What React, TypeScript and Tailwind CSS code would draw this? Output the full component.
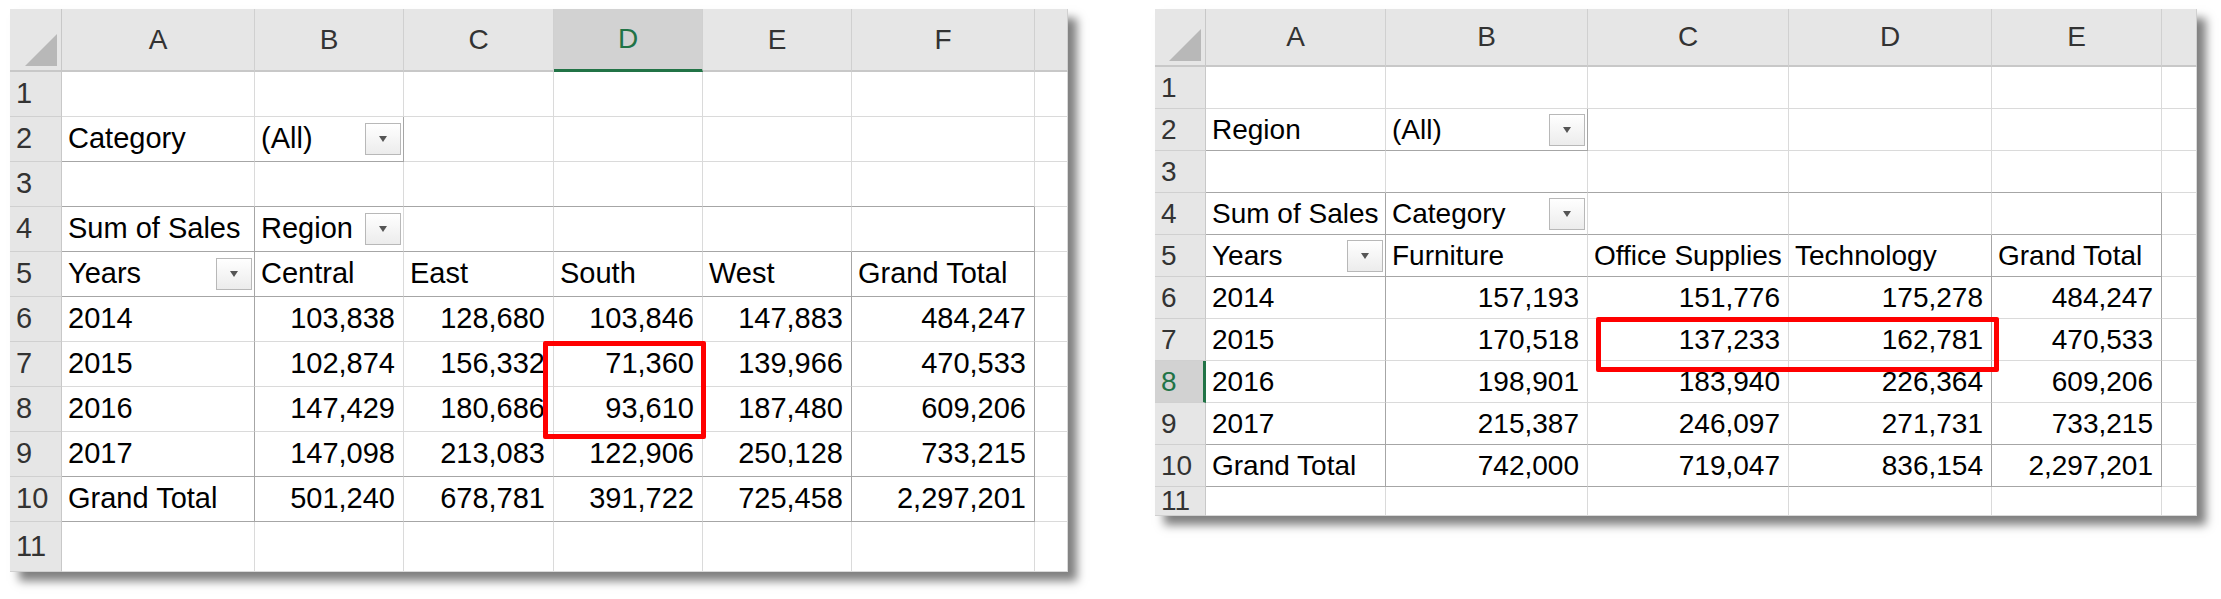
import React from "react";

type Cell = { t?: string; r?: boolean; dd?: boolean; cls?: string };

const Tri = () => (
  <svg width="14" height="10" viewBox="0 0 14 10"><path d="M3 2h8l-4 6z" fill="#555" /></svg>
);

const DD = () => (
  <div className="absolute right-[2px] top-1/2 -translate-y-1/2 w-[36px] h-[32px] border border-[#b8b8b8] bg-gradient-to-b from-white to-[#ececec] flex items-center justify-center">
    <Tri />
  </div>
);

function Sheet(props: {
  cols: string;
  letters: string[];
  headH: string;
  rowH: string;
  rows: Cell[][];
  hiCol?: number;
  hiRow?: number;
  fs: string;
  red: string;
  lastRowCls: string;
}) {
  const { letters, rows } = props;
  return (
    <div className="relative bg-white shadow-[9px_9px_9px_rgba(0,0,0,0.5)] overflow-hidden" style={{ fontFamily: "'Liberation Sans', Arial, sans-serif" }}>
      <div className={`grid ${props.cols}`}>
        <div className={`${props.headH} bg-[#e6e6e6] border-r border-b-2 border-[#c8c8c8] relative`}>
          <svg className="absolute right-[4px] bottom-[4px]" width="32" height="32" viewBox="0 0 32 32"><path d="M32 0V32H0z" fill="#b8b8b8" /></svg>
        </div>
        {letters.map((l, i) => (
          <div
            key={i}
            className={`${props.headH} flex items-center justify-center text-[28px] text-[#333] border-r border-[#d0d0d0] ${
              props.hiCol === i ? "bg-[#d2d2d2] border-b-[3px] border-b-[#217346] text-[#217346]" : "bg-[#e6e6e6] border-b-2 border-b-[#c8c8c8]"
            }`}
          >
            {l}
          </div>
        ))}
        {rows.map((row, ri) => (
          <React.Fragment key={ri}>
            <div
              className={`${ri === rows.length - 1 ? props.lastRowCls : props.rowH} flex items-center pl-[6px] ${props.fs} text-[#333] border-b border-[#d0d0d0] ${
                props.hiRow === ri ? "bg-[#d2d2d2] border-r-[3px] border-r-[#217346] text-[#217346]" : "bg-[#e6e6e6] border-r border-r-[#c8c8c8]"
              }`}
            >
              {ri + 1}
            </div>
            {row.map((c, ci) => (
              <div
                key={ci}
                className={`${ri === rows.length - 1 ? props.lastRowCls : props.rowH} relative flex items-center ${props.fs} text-black whitespace-nowrap overflow-visible border-r border-b border-[#dadada] ${
                  c.r ? "justify-end pr-[8px]" : "pl-[6px]"
                } ${c.cls ?? ""}`}
              >
                {c.t}
                {c.dd && <DD />}
              </div>
            ))}
          </React.Fragment>
        ))}
      </div>
      <div className={`absolute border-[5px] border-[#ff0000] ${props.red}`} />
    </div>
  );
}

const D = "border-b-[#a6a6a6]";
const R = "border-r-[#a6a6a6]";

function leftRows(): Cell[][] {
  const e = (n: number, cls = ""): Cell[] => Array.from({ length: n }, () => ({ cls }));
  const data = [
    ["2014", "103,838", "128,680", "103,846", "147,883", "484,247"],
    ["2015", "102,874", "156,332", "71,360", "139,966", "470,533"],
    ["2016", "147,429", "180,686", "93,610", "187,480", "609,206"],
    ["2017", "147,098", "213,083", "122,906", "250,128", "733,215"],
    ["Grand Total", "501,240", "678,781", "391,722", "725,458", "2,297,201"],
  ];
  const rows: Cell[][] = [];
  rows.push(e(7));
  rows.push([
    { t: "Category", cls: D },
    { t: "(All)", dd: true, cls: `${D} ${R}` },
    ...e(5),
  ]);
  rows.push([{ cls: "" }, ...e(6)]);
  rows.push([
    { t: "Sum of Sales", cls: `${D} ${R}` },
    { t: "Region", dd: true, cls: D },
    { cls: D }, { cls: D }, { cls: D }, { cls: `${D} ${R}` }, {},
  ]);
  rows.push([
    { t: "Years", dd: true, cls: `${D} ${R}` },
    { t: "Central", cls: D }, { t: "East", cls: D }, { t: "South", cls: D }, { t: "West", cls: `${D} ${R}` },
    { t: "Grand Total", cls: `${D} ${R}` }, {},
  ]);
  data.forEach((d, i) => {
    const last = i === 3 || i === 4;
    const b = last ? D : "";
    rows.push([
      { t: d[0], cls: `${R} ${b}` },
      ...d.slice(1, 5).map((t, j) => ({ t, r: true, cls: `${b} ${j === 3 ? R : ""}` })),
      { t: d[5], r: true, cls: `${R} ${b}` },
      {},
    ]);
  });
  rows.push(e(7));
  rows[2] = rows[2].map((c, i) => (i < 6 ? { ...c, cls: D } : c));
  return rows;
}

function rightRows(): Cell[][] {
  const e = (n: number): Cell[] => Array.from({ length: n }, () => ({}));
  const data = [
    ["2014", "157,193", "151,776", "175,278", "484,247"],
    ["2015", "170,518", "137,233", "162,781", "470,533"],
    ["2016", "198,901", "183,940", "226,364", "609,206"],
    ["2017", "215,387", "246,097", "271,731", "733,215"],
    ["Grand Total", "742,000", "719,047", "836,154", "2,297,201"],
  ];
  const rows: Cell[][] = [];
  rows.push(e(6));
  rows.push([{ t: "Region", cls: D }, { t: "(All)", dd: true, cls: `${D} ${R}` }, ...e(4)]);
  rows.push([{ cls: D }, { cls: D }, { cls: D }, { cls: D }, { cls: D }, {}]);
  rows.push([
    { t: "Sum of Sales", cls: `${D} ${R}` },
    { t: "Category", dd: true, cls: D },
    { cls: D }, { cls: D }, { cls: `${D} ${R}` }, {},
  ]);
  rows.push([
    { t: "Years", dd: true, cls: `${D} ${R}` },
    { t: "Furniture", cls: D }, { t: "Office Supplies", cls: `${D} overflow-hidden` }, { t: "Technology", cls: `${D} ${R}` },
    { t: "Grand Total", cls: `${D} ${R}` }, {},
  ]);
  data.forEach((d, i) => {
    const b = i >= 3 ? D : "";
    rows.push([
      { t: d[0], cls: `${R} ${b}` },
      { t: d[1], r: true, cls: b },
      { t: d[2], r: true, cls: b },
      { t: d[3], r: true, cls: `${R} ${b}` },
      { t: d[4], r: true, cls: `${R} ${b}` },
      {},
    ]);
  });
  rows.push(e(6));
  return rows;
}

export default function App() {
  return (
    <div className="w-[2221px] h-[599px] bg-white flex items-start pt-[9px] pl-[10px] overflow-hidden">
      <div className="w-[1058px]">
        <Sheet
          cols="grid-cols-[52px_193px_149px_150px_149px_149px_183px_33px]"
          letters={["A", "B", "C", "D", "E", "F", ""]}
          headH="h-[63px]"
          rowH="h-[45px]"
          lastRowCls="h-[50px]"
          rows={leftRows()}
          hiCol={3}
          fs="text-[29px]"
          red="left-[533px] top-[332px] w-[163px] h-[98px] rounded-[2px]"
        />
      </div>
      <div className="w-[1042px] ml-[87px]">
        <Sheet
          cols="grid-cols-[51px_180px_202px_201px_203px_170px_35px]"
          letters={["A", "B", "C", "D", "E", ""]}
          headH="h-[58px]"
          rowH="h-[42px]"
          lastRowCls="h-[29px]"
          rows={rightRows()}
          hiRow={7}
          fs="text-[28px]"
          red="left-[441px] top-[308px] w-[403px] h-[55px] rounded-[2px]"
        />
      </div>
    </div>
  );
}
